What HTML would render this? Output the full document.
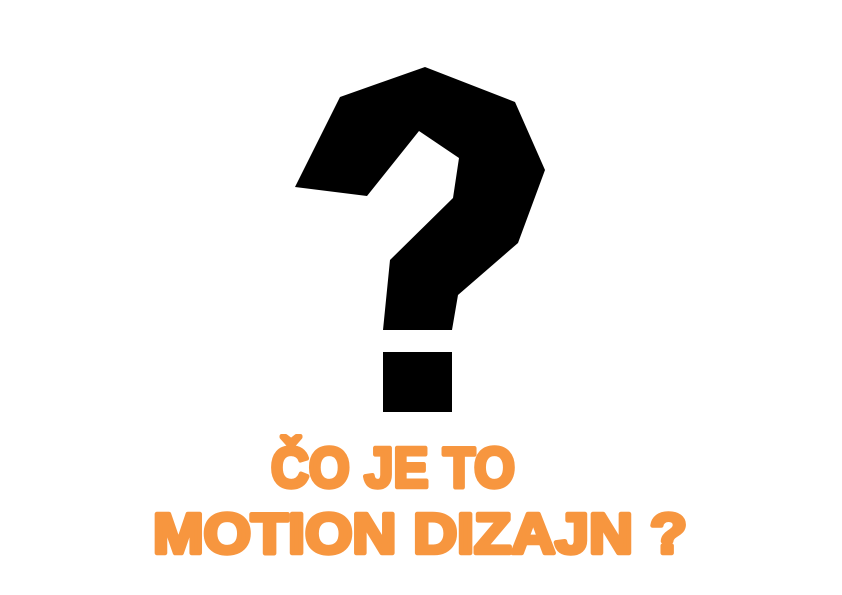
<!DOCTYPE html>
<html><head><meta charset="utf-8"><style>
html,body{margin:0;padding:0;background:#fff;width:842px;height:595px;overflow:hidden}
svg{display:block}
</style></head><body>
<svg width="842" height="595" viewBox="0 0 842 595" xmlns="http://www.w3.org/2000/svg">
<rect width="842" height="595" fill="#fff"/>
<polygon fill="#000" points="340,97 425,67 515,102 545,170 518,243 458,295 452,330 383,330 390,260 453,198 459,158 419,131 367,196 295,187"/>
<rect x="383" y="352" width="69" height="60" fill="#000"/>
<g font-family="'Liberation Sans',sans-serif" font-weight="bold" font-size="57" fill="#F7963F" stroke="#F7963F" stroke-width="4.5" stroke-linejoin="round">
<text x="271" y="487" textLength="244" lengthAdjust="spacingAndGlyphs">ČO JE TO</text>
<text x="153" y="553" textLength="534" lengthAdjust="spacingAndGlyphs">MOTION DIZAJN ?</text>
</g>
</svg>
</body></html>
